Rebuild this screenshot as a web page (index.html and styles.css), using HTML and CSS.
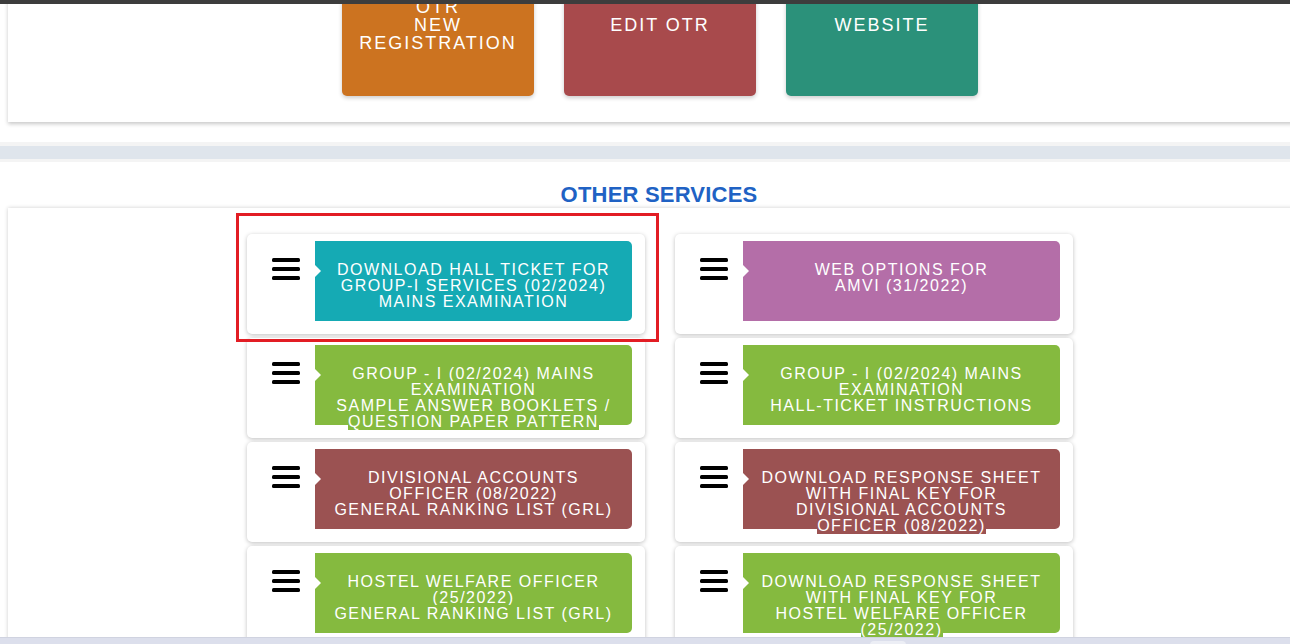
FILE: index.html
```html
<!DOCTYPE html>
<html lang="en">

<head>
    <meta charset="UTF-8">
    <meta name="viewport" content="width=device-width, initial-scale=1.0">
    <title>Other Services</title>
    <link rel="stylesheet" href="styles.css">
</head>

<body>
    <div class="top-strip"></div>

    <div class="top-card">
        <a class="top-btn orange" href="#"><span>OTR<br>NEW<br>REGISTRATION</span></a>
        <a class="top-btn red" href="#"><span>EDIT OTR</span></a>
        <a class="top-btn green" href="#"><span>WEBSITE</span></a>
    </div>

    <div class="divider"></div>

    <h2 class="section-title">OTHER SERVICES</h2>

    <div class="services-card">
        <div class="services-grid">
            <div class="service">
                <span class="highlight"></span>
                <div class="menu-icon">
                    <svg width="28" height="23" viewBox="0 0 28 23"><rect x="0" y="0" width="28" height="4" rx="1.5"/><rect x="0" y="9" width="28" height="4" rx="1.5"/><rect x="0" y="18" width="28" height="4" rx="1.5"/></svg>
                </div>
                <a class="label teal" href="#"><span>Download Hall Ticket for<br>Group-I Services (02/2024)<br>Mains Examination</span></a>
            </div>
            <div class="service">
                <div class="menu-icon">
                    <svg width="28" height="23" viewBox="0 0 28 23"><rect x="0" y="0" width="28" height="4" rx="1.5"/><rect x="0" y="9" width="28" height="4" rx="1.5"/><rect x="0" y="18" width="28" height="4" rx="1.5"/></svg>
                </div>
                <a class="label purple" href="#"><span>Web Options for<br>AMVI (31/2022)</span></a>
            </div>
            <div class="service">
                <div class="menu-icon">
                    <svg width="28" height="23" viewBox="0 0 28 23"><rect x="0" y="0" width="28" height="4" rx="1.5"/><rect x="0" y="9" width="28" height="4" rx="1.5"/><rect x="0" y="18" width="28" height="4" rx="1.5"/></svg>
                </div>
                <a class="label lime" href="#"><span>Group - I (02/2024) Mains<br>Examination<br>Sample Answer Booklets /<br>Question Paper Pattern</span></a>
            </div>
            <div class="service">
                <div class="menu-icon">
                    <svg width="28" height="23" viewBox="0 0 28 23"><rect x="0" y="0" width="28" height="4" rx="1.5"/><rect x="0" y="9" width="28" height="4" rx="1.5"/><rect x="0" y="18" width="28" height="4" rx="1.5"/></svg>
                </div>
                <a class="label lime" href="#"><span>Group - I (02/2024) Mains<br>Examination<br>Hall-Ticket Instructions</span></a>
            </div>
            <div class="service">
                <div class="menu-icon">
                    <svg width="28" height="23" viewBox="0 0 28 23"><rect x="0" y="0" width="28" height="4" rx="1.5"/><rect x="0" y="9" width="28" height="4" rx="1.5"/><rect x="0" y="18" width="28" height="4" rx="1.5"/></svg>
                </div>
                <a class="label brick" href="#"><span>Divisional Accounts<br>Officer (08/2022)<br>General Ranking List (GRL)</span></a>
            </div>
            <div class="service">
                <div class="menu-icon">
                    <svg width="28" height="23" viewBox="0 0 28 23"><rect x="0" y="0" width="28" height="4" rx="1.5"/><rect x="0" y="9" width="28" height="4" rx="1.5"/><rect x="0" y="18" width="28" height="4" rx="1.5"/></svg>
                </div>
                <a class="label brick" href="#"><span>Download Response Sheet<br>with Final Key for<br>Divisional Accounts<br>Officer (08/2022)</span></a>
            </div>
            <div class="service">
                <div class="menu-icon">
                    <svg width="28" height="23" viewBox="0 0 28 23"><rect x="0" y="0" width="28" height="4" rx="1.5"/><rect x="0" y="9" width="28" height="4" rx="1.5"/><rect x="0" y="18" width="28" height="4" rx="1.5"/></svg>
                </div>
                <a class="label lime" href="#"><span>Hostel Welfare Officer<br>(25/2022)<br>General Ranking List (GRL)</span></a>
            </div>
            <div class="service">
                <div class="menu-icon">
                    <svg width="28" height="23" viewBox="0 0 28 23"><rect x="0" y="0" width="28" height="4" rx="1.5"/><rect x="0" y="9" width="28" height="4" rx="1.5"/><rect x="0" y="18" width="28" height="4" rx="1.5"/></svg>
                </div>
                <a class="label lime" href="#"><span>Download Response Sheet<br>with Final Key for<br>Hostel Welfare Officer<br>(25/2022)</span></a>
            </div>
        </div>
    </div>

    <div class="bottom-bar"><span class="bottom-tab"></span></div>
</body>

</html>
```

FILE: styles.css
```css
* {
    margin: 0;
    padding: 0;
    box-sizing: border-box;
}

html,
body {
    overflow-x: hidden;
}

body {
    background-color: #fff;
    font-family: "Liberation Sans", Arial, sans-serif;
    color: #222;
}

a {
    text-decoration: none;
    color: #fff;
}

/* dark strip over the top edge */
.top-strip {
    position: fixed;
    top: 0;
    left: 0;
    right: 0;
    height: 4px;
    background-color: #3d3d3d;
    z-index: 10;
}

/* Top buttons */
.top-card {
    width: 1304px;
    margin: -20px 0 0 8px;
    padding-bottom: 26px;
    background-color: #fff;
    display: flex;
    justify-content: center;
    gap: 30px;
    box-shadow: 0 2px 4px rgba(0, 0, 0, 0.22);
}

.top-btn {
    width: 192px;
    height: 116px;
    padding-top: 18px;
    border-radius: 0 0 5px 5px;
    box-shadow: 0 2px 4px rgba(0, 0, 0, 0.2);
    font-size: 18px;
    line-height: 18px;
    letter-spacing: 2px;
    text-align: center;
}

.top-btn span {
    height: 54px;
    display: flex;
    align-items: center;
    justify-content: center;
}

.orange {
    background-color: #cc7320;
}

.red {
    background-color: #a84a4c;
}

.green {
    background-color: #2b917a;
}

.divider {
    margin-top: 20px;
    height: 20px;
    background-color: #dfe5ec;
    border-top: 4px solid #f4f4f4;
    border-bottom: 3px solid #f4f4f4;
}

.section-title {
    padding: 20px 0 0 28px;
    font-size: 22px;
    line-height: 26px;
    font-weight: bold;
    letter-spacing: 0.2px;
    color: #2062c4;
    text-align: center;
}

/* Services */
.services-card {
    width: 1304px;
    margin-left: 8px;
    padding-top: 26px;
    background-color: #fff;
    box-shadow: 0 0 4px rgba(0, 0, 0, 0.2);
}

.services-grid {
    display: grid;
    grid-template-columns: 398px 398px;
    justify-content: center;
    column-gap: 30px;
    row-gap: 4px;
}

.service {
    position: relative;
    height: 100px;
    display: flex;
    padding: 7px 13px 13px 0;
    background-color: #fff;
    border-radius: 5px;
    box-shadow: 0 1px 4px rgba(0, 0, 0, 0.25);
}

.menu-icon {
    width: 68px;
    padding: 17px 0 0 25px;
}

.menu-icon svg {
    display: block;
    fill: #000;
}

.label {
    position: relative;
    width: 317px;
    height: 80px;
    padding: 21px 8px 0;
    border-radius: 0 5px 5px 0;
    font-size: 16px;
    line-height: 16px;
    letter-spacing: 1.5px;
    text-transform: uppercase;
    text-align: center;
    white-space: nowrap;
}

.label span {
    background-color: inherit;
}

.label::before {
    content: "";
    position: absolute;
    left: 0;
    top: 24px;
    border-left: 6px solid #fff;
    border-top: 6px solid transparent;
    border-bottom: 6px solid transparent;
}

.teal {
    background-color: #15aab4;
}

.purple {
    background-color: #b46ea8;
}

.lime {
    background-color: #85ba3f;
}

.brick {
    background-color: #9b5252;
}

/* red outline drawn over the first item */
.highlight {
    position: absolute;
    left: -11px;
    top: -21px;
    width: 423px;
    height: 129px;
    border: 3px solid #e21d24;
    z-index: 5;
}

.bottom-bar {
    position: fixed;
    left: 0;
    right: 0;
    bottom: 0;
    height: 7px;
    background-color: #dcdfec;
    border-top: 1px solid #d0d3e0;
    z-index: 10;
}

.bottom-tab {
    position: absolute;
    left: 870px;
    top: 3px;
    width: 36px;
    height: 10px;
    background-color: #eceef5;
    border-radius: 4px;
}
```
